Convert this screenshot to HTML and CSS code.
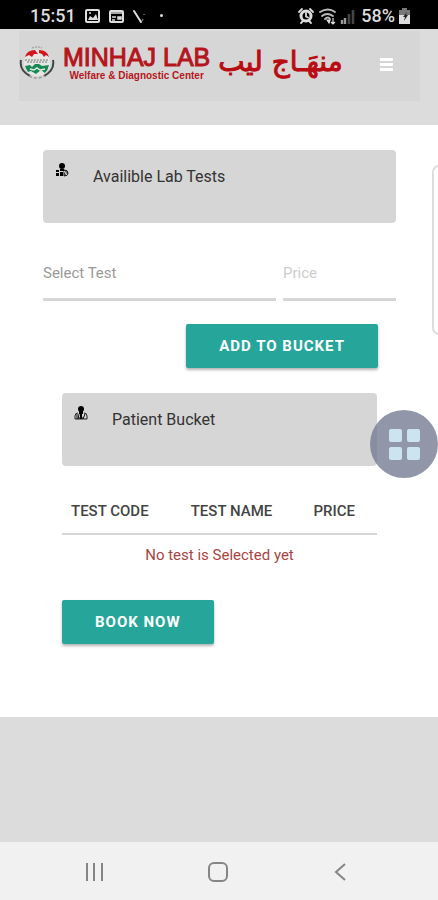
FILE: index.html
```html
<!DOCTYPE html>
<html lang="en">
<head>
<meta charset="utf-8">
<meta name="viewport" content="width=device-width, initial-scale=1">
<title>Minhaj Lab</title>
<link rel="stylesheet" href="styles.css">
</head>
<body>
<div class="status">
  <div class="status-group">
    <span class="clock">15:51</span>
    <svg class="status-notes" width="76" height="18" viewBox="0 0 76 18" aria-hidden="true">
      <rect x="2" y="3" width="13" height="12" rx="1" fill="none" stroke="#ddd" stroke-width="2"/>
      <path d="M4 13l2-4 3 2 3-4 2 6z" fill="#ddd"/><circle cx="6" cy="6" r="1" fill="#ddd"/>
      <rect x="26" y="4" width="13" height="11" rx="1" fill="none" stroke="#ddd" stroke-width="2"/>
      <path d="M26 6h13M28 10h4M28 13h3M34 10h3v2h-3z" stroke="#ddd" stroke-width="1.500" fill="#ddd"/>
      <path d="M50 4l7 11" stroke="#ddd" stroke-width="2" stroke-linecap="round"/><path d="M58 14l1-2M60 7v1" stroke="#777" stroke-width="1.500"/>
    </svg>
    <span class="dot"></span>
  </div>
  <div class="status-group">
    <svg width="60" height="18" viewBox="0 0 60 18" aria-hidden="true">
      <circle cx="9" cy="9" r="5" fill="none" stroke="#ddd" stroke-width="3"/>
      <path d="M9 6v3.500l2 1M2 5l3-3M16 5l-3-3M4 16l2-2M14 16l-2-2" fill="none" stroke="#ddd" stroke-width="1.800" stroke-linecap="round"/>
      <g fill="none" stroke="#bbb" stroke-width="1.800" stroke-linecap="round"><path d="M23 5q8-5 15 0"/><path d="M25 9q5-4 11 0"/><path d="M28 12q3-3 5 0"/></g>
      <path d="M30 13l2 3 1-3zM36 11v6M34 15l2 2 2-2" fill="#ddd" stroke="#ddd" stroke-width="1.200"/>
      <path d="M45 13v4M48 11v6" stroke="#999" stroke-width="2.400"/><path d="M52 7v10M56 3v14" stroke="#444" stroke-width="2.600"/>
    </svg>
    <span class="charge">58%</span>
    <svg width="11" height="16" viewBox="0 0 11 16" aria-hidden="true">
      <path d="M3 2V0h5v2h3v6H0V2z" fill="#777"/><path d="M0 7h11v9H0z" fill="#ddd"/><path d="M8 4l-4 5h2l-1 4 4-6H7z" fill="#222"/>
    </svg>
  </div>
</div>

<header class="header">
  <div class="brand-bar">
    <svg class="emblem" width="36" height="36" viewBox="0 0 36 36" aria-hidden="true">
      <circle cx="18" cy="18" r="13" fill="#e6e6e4"/>
      <path d="M13 3q5-2 10 0" fill="none" stroke="#aaa" stroke-width="1.500" stroke-dasharray="2 1"/>
      <path d="M6 12Q8 5 16 5l3 4-4 0-2 3-3-2zM30 12Q28 5 20 5l0 3 3 1 2 3 2-2z" fill="#d4151e"/>
      <path d="M6 15h24M8 17h20" stroke="#999" stroke-width="1.500" stroke-dasharray="2 1"/>
      <path d="M6 21l5-1 2 2 3-3 4 0 3 2 7-1q-1 5-4 8l-4-3-5 4-5-3-3 1q-2-3-3-6z" fill="#168a55"/>
      <path d="M11 24l4 1 3-2 3 2 5-1" fill="none" stroke="#e6e6e4" stroke-width="1.500"/>
      <path d="M2 15q-2 10 9 16" fill="none" stroke="#444" stroke-width="2"/>
      <path d="M34 15q2 10-9 16" fill="none" stroke="#444" stroke-width="2"/>
      <path d="M10 31q8 4 16 0" fill="none" stroke="#999" stroke-width="1.500" stroke-dasharray="3 2"/>
    </svg>
    <div class="brand">
      <span class="brand-name">MINHAJ LAB</span>
      <span class="brand-sub">Welfare &amp; Diagnostic Center</span>
    </div>
    <span class="brand-urdu" lang="ur" dir="rtl">منهَـاج ليب</span>
    <button class="menu" type="button" aria-label="Menu"><span></span><span></span><span></span></button>
  </div>
</header>

<main class="main">
  <section class="tests">
    <div class="card">
      <svg width="14" height="14" viewBox="0 0 14 14" aria-hidden="true"><circle cx="7" cy="3" r="3" fill="#000"/><path d="M5 6h4v2H5zM1 7h3v2H1zM1 10h3v3H1zM5 9h3v4H5z" fill="#000"/><path d="M9 7q4 0 4 3t-4 3z" fill="#777" stroke="#111"/><path d="M9 8l3 4" stroke="#ddd"/></svg>
      <h2>Availible Lab Tests</h2>
    </div>
    <form class="fields">
      <select class="field" aria-label="Select Test"><option>Select Test</option></select>
      <input class="field price" type="text" placeholder="Price" aria-label="Price">
    </form>
    <div class="add-row"><button class="btn" type="button">Add to Bucket</button></div>
  </section>

  <section class="bucket">
    <div class="card">
      <svg width="14" height="14" viewBox="0 0 14 14" aria-hidden="true"><circle cx="7" cy="3" r="3" fill="#000"/><path d="M5 5h4v3H5zM6 8h2v5H6z" fill="#000"/><path d="M4 7q-3 0-3 3v3h12v-3q0-3-3-3" fill="none" stroke="#222"/><path d="M3 8v5M5 8l-1 5M9 13l2-5M4 12h6" stroke="#111"/></svg>
      <h2>Patient Bucket</h2>
    </div>
    <table class="table">
      <thead><tr><th class="col-code">Test Code</th><th class="col-name">Test Name</th><th>Price</th></tr></thead>
      <tbody><tr><td colspan="3">No test is Selected yet</td></tr></tbody>
    </table>
    <button class="btn" type="button">Book Now</button>
  </section>
</main>

<footer class="footer"></footer>

<nav class="nav" aria-label="System">
  <button type="button" aria-label="Recent apps"><svg width="24" height="24" viewBox="0 0 24 24"><path d="M4 3v18M11 3v18M19 3v18" stroke="#858585" stroke-width="2"/></svg></button>
  <button type="button" aria-label="Home"><svg width="24" height="24" viewBox="0 0 24 24"><rect x="3" y="3" width="18" height="18" rx="5" fill="none" stroke="#858585" stroke-width="2"/></svg></button>
  <button type="button" aria-label="Back"><svg width="24" height="24" viewBox="0 0 24 24"><path d="M17 4l-9 8 9 8" fill="none" stroke="#858585" stroke-width="2"/></svg></button>
</nav>

<div class="edge-panel"></div>
<button class="assist" type="button" aria-label="Assistant menu"><span></span><span></span><span></span><span></span></button>
</body>
</html>
```
FILE: styles.css
```css
* { box-sizing: border-box; }
body {
  margin: 0;
  min-height: 100vh;
  display: flex;
  flex-direction: column;
  position: relative;
  overflow-x: hidden;
  background: #fff;
  font-family: Roboto, "Liberation Sans", sans-serif;
  color: #333;
}
button { border: 0; padding: 0; background: none; font-family: inherit; cursor: pointer; }
h2 { margin: 0; }

.status {
  display: flex;
  justify-content: space-between;
  align-items: center;
  height: 29px;
  padding: 2px 28px 0 30px;
  background: #000;
  color: #ddd;
  font-size: 18px;
  font-weight: 500;
}
.status-group { display: flex; align-items: center; gap: 4px; }
.status-notes { margin-left: 4px; }
.dot { width: 3px; height: 3px; border-radius: 50%; background: #ddd; margin-left: -4px; }

.header { padding: 2px 18px 24px 19px; background: #dcdcdc; }
.brand-bar {
  display: flex;
  align-items: center;
  height: 70px;
  padding-right: 27px;
  background: #d6d6d6;
}
.emblem { margin-bottom: 6px; }
.brand { display: flex; flex-direction: column; align-items: center; margin: 0 8px 8px; color: #b5161c; }
.brand-name {
  font: 25px/28px "Liberation Sans", sans-serif;
  -webkit-text-stroke: 1px #b5161c;
  white-space: nowrap;
}
.brand-sub { font: bold 10px/10px "Liberation Sans", sans-serif; white-space: nowrap; }
.brand-urdu {
  font: 28px/40px "DejaVu Sans", sans-serif;
  -webkit-text-stroke: 1px #b90c12;
  color: #b90c12;
  white-space: nowrap;
  margin-bottom: 8px;
}
.menu { display: flex; flex-direction: column; gap: 2px; margin: 0 0 4px auto; }
.menu span { width: 13px; height: 3px; background: #fff; }

.main { padding: 25px 42px 73px 43px; }
.card {
  display: flex;
  align-items: flex-start;
  gap: 24px;
  height: 73px;
  padding: 13px 12px;
  border-radius: 4px;
  background: #d6d6d6;
}
.card h2 { font-size: 16px; line-height: 28px; font-weight: 400; }

.fields { display: flex; gap: 7px; padding-top: 25px; }
.field {
  flex: 233 1 0;
  min-width: 0;
  height: 53px;
  padding: 0;
  border: 0;
  border-bottom: 3px solid #d6d6d6;
  border-radius: 0;
  background: transparent;
  appearance: none;
  font: 15px Roboto, "Liberation Sans", sans-serif;
  color: #999;
}
.price { flex-grow: 113; }
.price::placeholder { color: #ccc; opacity: 1; }

.add-row { display: flex; justify-content: flex-end; padding: 23px 18px 25px; }
.btn {
  height: 44px;
  padding: 0 33px;
  border-radius: 2px;
  background: #26a69a;
  box-shadow: 0 2px 3px rgba(0, 0, 0, 0.3);
  color: #fff;
  font-size: 15px;
  font-weight: 700;
  letter-spacing: 1px;
  text-transform: uppercase;
}

.bucket { padding: 0 19px; }
.table { width: 100%; margin: 22px 0 26px; border-collapse: collapse; table-layout: fixed; font-size: 15px; }
.table th {
  height: 46px;
  padding: 0 0 0 9px;
  border-bottom: 2px solid #d6d6d6;
  color: #444;
  font-weight: 500;
  text-align: left;
  text-transform: uppercase;
}
.col-code { width: 38%; }
.col-name { width: 39%; }
.table td { height: 40px; padding: 0; color: #a94442; text-align: center; }

.footer { flex: 1 0 40px; background: #dcdcdc; }

.nav {
  display: flex;
  justify-content: space-between;
  align-items: center;
  height: 58px;
  padding: 2px 86px 0 83px;
  background: #f1f1f1;
}
.nav svg { display: block; }

.edge-panel {
  position: absolute;
  top: 165px;
  right: -8px;
  width: 14px;
  height: 170px;
  border: 2px solid #ddd;
  border-radius: 8px;
  background: #fff;
}
.assist {
  position: absolute;
  top: 410px;
  right: 0;
  width: 68px;
  height: 68px;
  display: grid;
  grid-template-columns: 13px 13px;
  gap: 5px;
  place-content: center;
  border-radius: 50%;
  background: rgba(115, 120, 145, 0.78);
}
.assist span { height: 13px; border-radius: 2px; background: #cbe4ee; }
```
